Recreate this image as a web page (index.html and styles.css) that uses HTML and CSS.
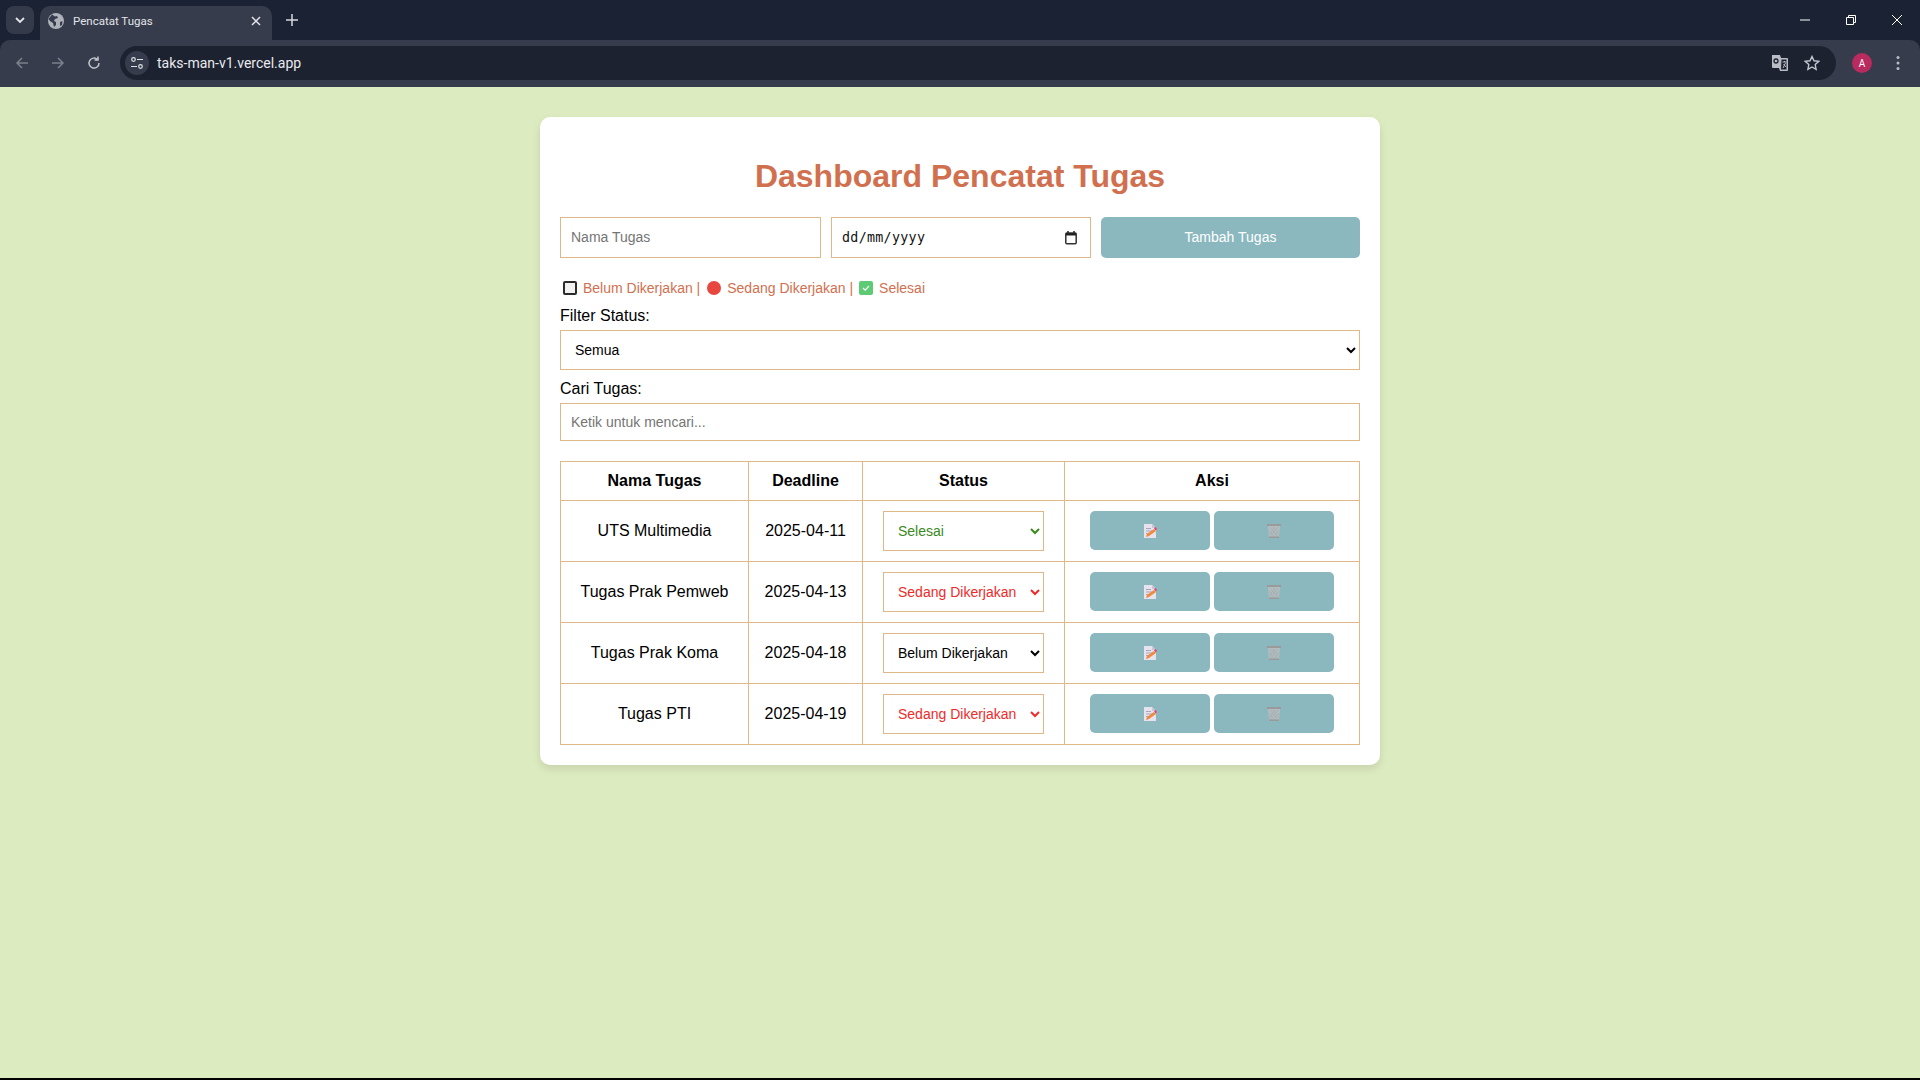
FILE: index.html
```html
<!DOCTYPE html>
<html lang="en">
<head>
  <meta charset="UTF-8">
  <title>Pencatat Tugas</title>
  <link rel="stylesheet" href="styles.css">
</head>
<body>
  <svg width="0" height="0" class="defs">
    <symbol id="edit-icon" viewBox="0 0 14 14">
      <path d="M1 0h8l4 4v10H1z" fill="#e6e3ee"/>
      <path d="M9 0l4 4H9z" fill="#c9c5d6"/>
      <path d="M3 4h5v1H3zM3 6.500h7v1H3zM3 9h3v1H3z" fill="#a9a5ba"/>
      <path d="M3 13l1-3 7-5 2 2-7 5z" fill="#f08a3c"/>
      <path d="M11 4l1.500-1 1.500 2-1.500 1.500z" fill="#e0406a"/>
    </symbol>
    <symbol id="trash-icon" viewBox="0 0 14 14">
      <path d="M1 2h12l-1 12H2z" fill="#b3bdbf"/>
      <path d="M3 3l8 10M6 3l6 8M2 6l5 7M11 3L3 13M8 3l-6 8M12 6l-5 7" stroke="#9fabae" stroke-width=".6" fill="none"/>
      <path d="M0 0h14v2H0zM2 12.500h10V14H2z" fill="#9a9a9a"/>
    </symbol>
  </svg>

  <div class="browser">
    <div class="tabstrip">
      <div class="tab-search">
        <svg width="12" height="12" viewBox="0 0 12 12"><path d="M2 4l4 4 4-4" fill="none" stroke="#e3e5ea" stroke-width="1.800"/></svg>
      </div>
      <div class="tab">
        <svg width="16" height="16" viewBox="0 0 16 16"><circle cx="8" cy="8" r="8" fill="#aeb2bb"/><path d="M4 1.500l3 2 2-.5 1 2-3 1-1 2 2 1v3l-2 2-1-4-3-2-1.500-2zM12 9l2.500-1-.5 4-2 1z" fill="#363c4b"/></svg>
        <span class="tab-title">Pencatat Tugas</span>
        <svg class="tab-close" width="10" height="10" viewBox="0 0 10 10"><path d="M1 1l8 8M9 1l-8 8" stroke="#e3e5ea" stroke-width="1.500"/></svg>
      </div>
      <svg class="new-tab" width="14" height="14" viewBox="0 0 14 14"><path d="M7 1v12M1 7h12" stroke="#d5d8de" stroke-width="1.500"/></svg>
      <div class="window-btns">
        <svg width="12" height="12" viewBox="0 0 12 12"><path d="M1 6h10" stroke="#fff" stroke-width="1"/></svg>
        <svg width="12" height="12" viewBox="0 0 12 12"><path d="M1.500 3.500h7v7h-7zM3.500 3.500v-2h7v7h-2" fill="none" stroke="#fff" stroke-width="1"/></svg>
        <svg width="12" height="12" viewBox="0 0 12 12"><path d="M1 1l10 10M11 1L1 11" stroke="#fff" stroke-width="1"/></svg>
      </div>
    </div>
    <div class="toolbar">
      <svg width="16" height="16" viewBox="0 0 16 16"><path d="M14 8H3M8 3L3 8l5 5" fill="none" stroke="#7c818c" stroke-width="1.500"/></svg>
      <svg width="16" height="16" viewBox="0 0 16 16"><path d="M2 8h11M8 3l5 5-5 5" fill="none" stroke="#7c818c" stroke-width="1.500"/></svg>
      <svg width="16" height="16" viewBox="0 0 16 16"><path d="M13 8a5 5 0 1 1-1.500-3.500M12 1.500V5H8.500" fill="none" stroke="#c3c6cd" stroke-width="1.500"/></svg>
      <div class="omnibox">
        <span class="site-info">
          <svg width="14" height="14" viewBox="0 0 14 14"><circle cx="3.500" cy="3.500" r="1.800" fill="none" stroke="#dfe1e6" stroke-width="1.200"/><path d="M7 3.500h6M1 10.500h6" stroke="#dfe1e6" stroke-width="1.200"/><circle cx="10.500" cy="10.500" r="1.800" fill="none" stroke="#dfe1e6" stroke-width="1.200"/></svg>
        </span>
        <span class="url">taks-man-v1.vercel.app</span>
        <svg class="omni-translate" width="18" height="18" viewBox="0 0 18 18"><path d="M1 1h8l1 3h6a1 1 0 0 1 1 1v11a1 1 0 0 1-1 1H9l-1-3H2a1 1 0 0 1-1-1z" fill="#b9bcc4"/><path d="M10 5h6v11H9.500z" fill="#1c2230" stroke="#b9bcc4"/><path d="M11.500 8h4M13.500 7v1M12 14l2.500-5M12.500 10l2.500 3" stroke="#b9bcc4" fill="none"/><circle cx="5" cy="7" r="2" fill="none" stroke="#1c2230" stroke-width="1.300"/></svg>
        <svg class="omni-star" width="16" height="16" viewBox="0 0 16 16"><path d="M8 1.500l2 4.300 4.700.6-3.500 3.200.9 4.700L8 12l-4.100 2.300.9-4.700L1.300 6.400 6 5.800z" fill="none" stroke="#c3c6cd" stroke-width="1.400"/></svg>
      </div>
      <span class="avatar">A</span>
      <svg width="4" height="16" viewBox="0 0 4 16"><circle cx="2" cy="2.500" r="1.500" fill="#b9bcc4"/><circle cx="2" cy="8" r="1.500" fill="#b9bcc4"/><circle cx="2" cy="13.500" r="1.500" fill="#b9bcc4"/></svg>
    </div>
  </div>

  <div class="page">
    <div class="container">
      <h1 class="title">Dashboard Pencatat Tugas</h1>

      <div class="form-row">
        <input type="text" class="field name-field" placeholder="Nama Tugas">
        <div class="field date-field">
          <span class="date-text">dd/mm/yyyy</span>
          <svg width="12" height="14" viewBox="0 0 12 14"><path d="M3 0v2M9 0v2" stroke="#222" stroke-width="1.500"/><rect x=".8" y="2" width="10.400" height="10.800" rx="1" fill="none" stroke="#333" stroke-width="1.500"/><rect x="1" y="2" width="10" height="2.500" fill="#222"/></svg>
        </div>
        <button class="btn add-btn">Tambah Tugas</button>
      </div>

      <div class="legend">
        <span class="mark mark-todo"></span><span>Belum Dikerjakan |</span>
        <span class="mark mark-doing"></span><span>Sedang Dikerjakan |</span>
        <span class="mark mark-done"><svg width="10" height="10" viewBox="0 0 10 10"><path d="M2 5l2.200 2.200L8 3" fill="none" stroke="#fff" stroke-width="1.200"/></svg></span><span>Selesai</span>
      </div>

      <label class="label">Filter Status:</label>
      <select class="filter-select">
        <option>Semua</option>
        <option>Belum Dikerjakan</option>
        <option>Sedang Dikerjakan</option>
        <option>Selesai</option>
      </select>

      <label class="label label-search">Cari Tugas:</label>
      <input type="text" class="search-input" placeholder="Ketik untuk mencari...">

      <table class="task-table">
        <thead>
          <tr>
            <th class="col-name">Nama Tugas</th>
            <th class="col-date">Deadline</th>
            <th class="col-status">Status</th>
            <th>Aksi</th>
          </tr>
        </thead>
        <tbody>
          <tr>
            <td>UTS Multimedia</td>
            <td>2025-04-11</td>
            <td><select class="status-select done"><option>Selesai</option></select></td>
            <td><div class="actions"><button class="btn icon-btn"><svg width="14" height="14"><use href="#edit-icon"/></svg></button><button class="btn icon-btn"><svg width="14" height="14"><use href="#trash-icon"/></svg></button></div></td>
          </tr>
          <tr>
            <td>Tugas Prak Pemweb</td>
            <td>2025-04-13</td>
            <td><select class="status-select doing"><option>Sedang Dikerjakan</option></select></td>
            <td><div class="actions"><button class="btn icon-btn"><svg width="14" height="14"><use href="#edit-icon"/></svg></button><button class="btn icon-btn"><svg width="14" height="14"><use href="#trash-icon"/></svg></button></div></td>
          </tr>
          <tr>
            <td>Tugas Prak Koma</td>
            <td>2025-04-18</td>
            <td><select class="status-select"><option>Belum Dikerjakan</option></select></td>
            <td><div class="actions"><button class="btn icon-btn"><svg width="14" height="14"><use href="#edit-icon"/></svg></button><button class="btn icon-btn"><svg width="14" height="14"><use href="#trash-icon"/></svg></button></div></td>
          </tr>
          <tr>
            <td>Tugas PTI</td>
            <td>2025-04-19</td>
            <td><select class="status-select doing"><option>Sedang Dikerjakan</option></select></td>
            <td><div class="actions"><button class="btn icon-btn"><svg width="14" height="14"><use href="#edit-icon"/></svg></button><button class="btn icon-btn"><svg width="14" height="14"><use href="#trash-icon"/></svg></button></div></td>
          </tr>
        </tbody>
      </table>
    </div>
  </div>
  <div class="screen-edge"></div>
</body>
</html>
```

FILE: styles.css
```css
* {
  box-sizing: border-box;
}

html, body {
  height: 100%;
}

body {
  margin: 0;
  display: flex;
  flex-direction: column;
  height: 1080px;
  overflow: hidden;
  background-color: #ddebc0;
  font-family: "Liberation Sans", Arial, sans-serif;
}

.defs {
  position: absolute;
}

/* browser frame */
.browser {
  flex: none;
  height: 87px;
  background-color: #1b2233;
  font-family: Roboto, "Noto Sans", sans-serif;
}

.tabstrip {
  height: 40px;
  display: flex;
  align-items: flex-end;
  padding-left: 6px;
}

.tab-search {
  width: 28px;
  height: 28px;
  margin-bottom: 6px;
  margin-right: 6px;
  border-radius: 8px;
  background-color: #343a4a;
  display: flex;
  align-items: center;
  justify-content: center;
}

.tab {
  width: 232px;
  height: 34px;
  padding: 0 11px 4px 8px;
  border-radius: 10px 10px 0 0;
  background-color: #363c4b;
  display: flex;
  align-items: center;
  gap: 9px;
  color: #e3e5ea;
  font-size: 11.500px;
}

.tab-title {
  flex: 1;
}

.new-tab {
  margin: 0 0 13px 13px;
}

.window-btns {
  margin-left: auto;
  align-self: flex-start;
  display: flex;
  gap: 34px;
  padding: 14px 17px 0 0;
}

.toolbar {
  height: 47px;
  padding: 0 20px 1px 14px;
  border-radius: 10px 10px 0 0;
  background-color: #363c4b;
  display: flex;
  align-items: center;
  gap: 20px;
}

.omnibox {
  flex: 1;
  height: 34px;
  margin-left: -2px;
  margin-right: -4px;
  border-radius: 17px;
  background-color: #1c2230;
  display: flex;
  align-items: center;
  padding-left: 5px;
}

.site-info {
  width: 24px;
  height: 24px;
  border-radius: 50%;
  background-color: #363c4b;
  display: flex;
  align-items: center;
  justify-content: center;
}

.url {
  flex: 1;
  margin-left: 8px;
  color: #e8eaee;
  font-size: 14px;
}

.omni-translate {
  margin-right: 15px;
}

.omni-star {
  margin-right: 16px;
}

.avatar {
  width: 20px;
  height: 20px;
  margin-right: 4px;
  border-radius: 50%;
  background-color: #b92a5f;
  color: #fff;
  font-size: 10px;
  display: flex;
  align-items: center;
  justify-content: center;
}

/* page */
.page {
  flex: 1;
  padding-top: 30px;
}

.container {
  width: 840px;
  margin: 0 auto;
  padding: 20px;
  background-color: #fff;
  border-radius: 10px;
  box-shadow: 0 4px 8px rgba(0, 0, 0, 0.1);
}

.title {
  margin: 21px 0 22px;
  color: #d1704f;
  font-size: 32px;
  line-height: 37px;
  text-align: center;
}

.form-row {
  display: grid;
  grid-template-columns: 261px 260px 259px;
  gap: 10px;
}

.field {
  height: 41px;
  padding: 0 10px;
  border: 1px solid #deb887;
  font-family: inherit;
  font-size: 14px;
}

.name-field {
  padding-bottom: 2px;
}

.date-field {
  display: flex;
  align-items: center;
  justify-content: space-between;
  padding-right: 13px;
}

.date-text {
  color: #111;
  font-family: "DejaVu Sans Mono", monospace;
  font-size: 13.330px;
  letter-spacing: 0.300px;
}

.btn {
  border: none;
  border-radius: 5px;
  background-color: #8bb8bf;
  color: #fff;
  font-family: inherit;
  font-size: 14px;
  cursor: pointer;
}

.add-btn {
  height: 41px;
  padding-bottom: 3px;
}

.legend {
  display: flex;
  align-items: center;
  height: 17px;
  margin-top: 21px;
  color: #d1704f;
  font-size: 14px;
}

.mark {
  width: 14px;
  height: 14px;
  flex: none;
  display: flex;
  align-items: center;
  justify-content: center;
}

.mark-todo {
  margin: 0 6px 0 3px;
  border: 2px solid #2b2b2b;
  border-radius: 2px;
  background-color: #f2f2f2;
}

.mark-doing {
  margin: 0 6px 0 7px;
  border-radius: 50%;
  background-color: #e8473f;
}

.mark-done {
  margin: 0 6px;
  border-radius: 2px;
  background-color: #5ccb74;
}

.label {
  display: block;
  margin-top: 10px;
  color: #000;
  font-size: 16px;
  line-height: 20px;
}

.label-search {
  margin-top: 9px;
}

.filter-select {
  display: block;
  width: 100%;
  height: 40px;
  margin-top: 4px;
  padding: 0 10px;
  border: 1px solid #deb887;
  border-radius: 0;
  background-color: #fff;
  font-family: inherit;
  font-size: 14px;
}

.search-input {
  display: block;
  width: 100%;
  height: 38px;
  margin-top: 4px;
  padding: 0 10px;
  border: 1px solid #deb887;
  font-family: inherit;
  font-size: 14px;
}

input::placeholder {
  color: #757575;
}

.task-table {
  width: 800px;
  margin-top: 20px;
  border-collapse: collapse;
  table-layout: fixed;
}

.task-table th, .task-table td {
  padding: 10px;
  border: 1px solid #deb887;
  text-align: center;
  font-size: 16px;
}

.task-table th {
  height: 39px;
  padding: 0 10px;
}

.col-name {
  width: 188px;
}

.col-date {
  width: 114px;
}

.col-status {
  width: 202px;
}

.status-select {
  width: 161px;
  height: 40px;
  padding: 0 10px;
  border: 1px solid #deb887;
  border-radius: 0;
  background-color: #fff;
  font-family: inherit;
  font-size: 14px;
  display: block;
  margin: 0 auto;
}

.status-select.done {
  color: #3a8a1e;
}

.status-select.doing {
  color: #f02a2a;
}

.actions {
  display: flex;
  justify-content: center;
  align-items: flex-start;
  height: 40px;
  gap: 4px;
}

.icon-btn {
  width: 120px;
  height: 39px;
  display: flex;
  align-items: center;
  justify-content: center;
  padding: 0;
}

.screen-edge {
  flex: none;
  height: 2px;
  background-color: #000;
}
```
